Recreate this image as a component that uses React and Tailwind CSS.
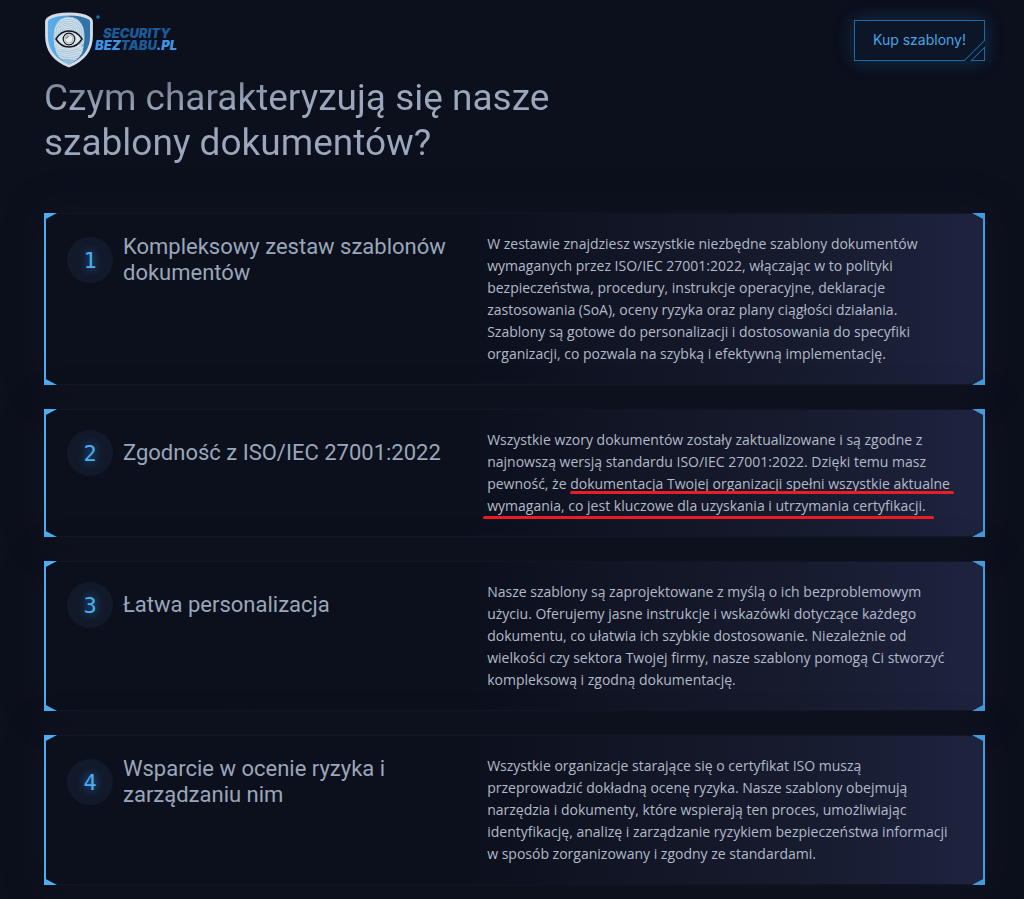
import React from "react";

const features = [
  {
    title: ["Kompleksowy zestaw szablonów", "dokumentów"],
    lines: [
      "W zestawie znajdziesz wszystkie niezbędne szablony dokumentów",
      "wymaganych przez ISO/IEC 27001:2022, włączając w to polityki",
      "bezpieczeństwa, procedury, instrukcje operacyjne, deklaracje",
      "zastosowania (SoA), oceny ryzyka oraz plany ciągłości działania.",
      "Szablony są gotowe do personalizacji i dostosowania do specyfiki",
      "organizacji, co pozwala na szybką i efektywną implementację.",
    ],
  },
  {
    title: ["Zgodność z ISO/IEC 27001:2022"],
    lines: [
      "Wszystkie wzory dokumentów zostały zaktualizowane i są zgodne z",
      "najnowszą wersją standardu ISO/IEC 27001:2022. Dzięki temu masz",
      <>
        pewność, że{" "}
        <Marked bar="-bottom-px -right-1 left-0">
          dokumentacja Twojej organizacji spełni wszystkie aktualne
        </Marked>
      </>,
      <Marked bar="-bottom-1 -left-1 -right-2">
        wymagania, co jest kluczowe dla uzyskania i utrzymania certyfikacji.
      </Marked>,
    ],
  },
  {
    title: ["Łatwa personalizacja"],
    lines: [
      "Nasze szablony są zaprojektowane z myślą o ich bezproblemowym",
      "użyciu. Oferujemy jasne instrukcje i wskazówki dotyczące każdego",
      "dokumentu, co ułatwia ich szybkie dostosowanie. Niezależnie od",
      "wielkości czy sektora Twojej firmy, nasze szablony pomogą Ci stworzyć",
      "kompleksową i zgodną dokumentację.",
    ],
  },
  {
    title: ["Wsparcie w ocenie ryzyka i", "zarządzaniu nim"],
    lines: [
      "Wszystkie organizacje starające się o certyfikat ISO muszą",
      "przeprowadzić dokładną ocenę ryzyka. Nasze szablony obejmują",
      "narzędzia i dokumenty, które wspierają ten proces, umożliwiając",
      "identyfikację, analizę i zarządzanie ryzykiem bezpieczeństwa informacji",
      "w sposób zorganizowany i zgodny ze standardami.",
    ],
  },
];

// Text with a red marker line under it
function Marked({ bar, children }) {
  return (
    <span className="relative">
      {children}
      <span className={`absolute h-[3px] rounded-full bg-[#ec1c24] ${bar}`}></span>
    </span>
  );
}

function Lines({ items }) {
  return items.map((line, i) => (
    <React.Fragment key={i}>
      {i > 0 && <br />}
      {line}
    </React.Fragment>
  ));
}

function Logo() {
  return (
    <a href="#" className="flex items-center" aria-label="Security Bez Tabu">
      <svg width="50" height="56" viewBox="0 0 50 56" aria-hidden="true">
        <defs>
          <linearGradient id="shield" x1="0" x2="1">
            <stop offset="0" stopColor="#5cb0f0" />
            <stop offset="0.5" stopColor="#4a9ede" />
            <stop offset="0.52" stopColor="#35719f" />
            <stop offset="1" stopColor="#2f74ad" />
          </linearGradient>
          <clipPath id="print">
            <path d="M25 5c8 0 14 6 15 14 1 8 0 15-2 22-3 5-8 9-13 12-5-3-9-6-12-11-3-7-4-14-3-23C11 11 17 5 25 5z" />
          </clipPath>
        </defs>
        <path
          d="M25 2c7 0 15 1 20 4 2 1 2.500 2 2.500 4v14c0 14-8 24-22.500 30C10 48 2.500 38 2.500 24V10c0-2 .5-3 2.500-4 5-3 13-4 20-4z"
          fill="url(#shield)"
          stroke="#d5dce3"
          strokeWidth="2.800"
        />
        <g clipPath="url(#print)">
          <rect width="50" height="56" fill="#8fbcdc" />
          <g fill="none" stroke="#d3dfe6" strokeWidth="1.300">
            {[3, 5, 7, 9, 11, 13, 15, 17, 19].map((r) => (
              <ellipse key={r} cx="24" cy="20" rx={r} ry={r * 0.9} />
            ))}
            {[0, 1, 2, 3, 4, 5, 6, 7, 8].map((i) => (
              <path key={i} d={`M6 ${34 + i * 2.4}c8-${5 + i} 20-5 36 ${3 - i}`} />
            ))}
          </g>
        </g>
        <path
          d="M12 27c3-5 8-8 13-8s10 3 13 8c-3 5-8 8-13 8s-10-3-13-8z"
          fill="#dbe5ea"
          stroke="#15191f"
          strokeWidth="1.500"
        />
        <circle cx="25" cy="27" r="5.800" fill="#dbe3e8" stroke="#15191f" strokeWidth="1.200" />
        <circle cx="25" cy="27" r="4" fill="#e6ebee" stroke="#8a949c" strokeWidth="0.600" />
        <path d="M22.500 26.500a2.500 2.500 0 0 1 2-2" fill="none" stroke="#15191f" strokeWidth="0.800" />
      </svg>
      <svg width="90" height="56" viewBox="0 0 90 56" aria-hidden="true">
        <circle cx="4" cy="5" r="1.600" fill="#2b70a8" stroke="#174977" />
        <g fontFamily="Inter, sans-serif" fontWeight="900" fontStyle="italic" fontSize="13">
          <text x="9" y="26" fill="#1c5a98">SECURITY</text>
          <text x="1" y="38" fill="#3f93e4">
            BEZ<tspan fill="#1c5a98">TABU</tspan>.PL
          </text>
        </g>
      </svg>
    </a>
  );
}

function BuyButton() {
  return (
    <button
      type="button"
      className="relative h-[41px] px-[19px] bg-[#0c1626] text-[#4aa3e6] text-sm whitespace-nowrap shadow-[0_0_18px_rgba(26,108,170,0.4)]"
    >
      <svg
        className="absolute inset-0 h-full w-full"
        viewBox="0 0 130 41"
        preserveAspectRatio="none"
        fill="none"
        stroke="#1c6ba8"
        aria-hidden="true"
      >
        <path d="M.5.5h129v20l-20 20H.5z" />
        <path d="M129.500 27.500v13h-13z" />
      </svg>
      <span className="relative">Kup szablony!</span>
    </button>
  );
}

function Edge({ className }) {
  return (
    <span className={`absolute -inset-y-px w-[13px] ${className}`} aria-hidden="true">
      <span className="absolute inset-y-0 left-0 w-[2px] bg-current"></span>
      <svg className="absolute top-0 left-0" width="13" height="7" fill="currentColor">
        <path d="M0 0h13L0 7z" />
      </svg>
      <svg className="absolute bottom-0 left-0" width="13" height="7" fill="currentColor">
        <path d="M0 7h13L0 0z" />
      </svg>
    </span>
  );
}

function FeatureCard({ number, title, lines }) {
  return (
    <li className="relative flex pl-[23px] pr-6 py-5 border-y border-[#111624] bg-linear-to-r from-[#0c101d] from-45% via-[#171b2e] via-80% to-[#1e2340] shadow-[0_0_36px_rgba(24,32,40,0.4)]">
      <Edge className="left-0 text-[#4cadf2]" />
      <Edge className="right-0 -scale-x-100 text-[#439bdb]" />
      <div className="w-[47%] shrink-0">
        <div className="flex items-center gap-2.5">
          <span className="flex size-[46px] shrink-0 items-center justify-center rounded-full bg-[#12192a] font-['DejaVu_Sans_Mono',monospace] text-[22px] text-[#4cadf2] [text-shadow:0_0_10px_#2385cf]">
            {number}
          </span>
          <h3 className="font-['Roboto',sans-serif] text-[22px] leading-[26px] text-[#9aa6ba]">
            <Lines items={title} />
          </h3>
        </div>
      </div>
      <p className="-my-px whitespace-nowrap font-['Open_Sans',sans-serif] text-sm leading-[22px] text-[#b2bac8]">
        <Lines items={lines} />
      </p>
    </li>
  );
}

export default function App() {
  return (
    <div className="min-h-screen bg-[#0c0f1c] pl-11 pr-[39px] pb-[14px] font-['Inter',sans-serif]">
      <header className="flex items-center justify-between pt-3">
        <Logo />
        <BuyButton />
      </header>
      <main className="pt-[7px]">
        <h2 className="font-['Roboto',sans-serif] text-[37px] leading-[45px] bg-[radial-gradient(200px_36px_at_100px_0px,#626c7f,#9ba7bc)] bg-clip-text text-transparent">
          Czym charakteryzują się nasze
          <br />
          szablony dokumentów?
        </h2>
        <ul className="mt-12 flex flex-col gap-6">
          {features.map((feature, i) => (
            <FeatureCard key={i} number={i + 1} title={feature.title} lines={feature.lines} />
          ))}
        </ul>
      </main>
    </div>
  );
}
